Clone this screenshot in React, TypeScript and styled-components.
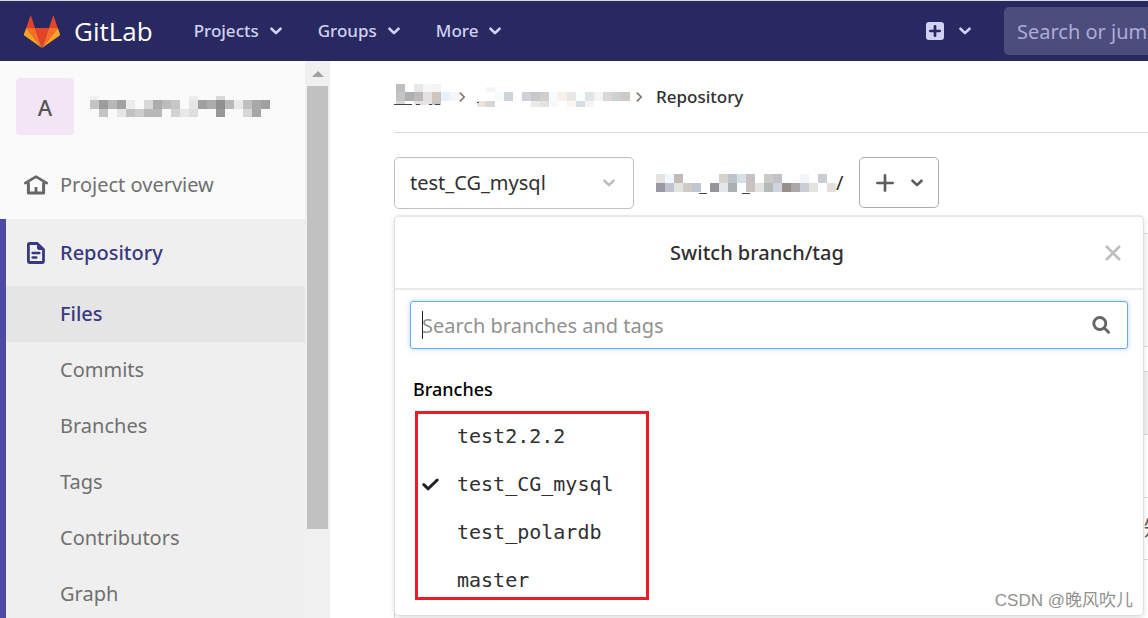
import React from "react";
import styled, { createGlobalStyle, css } from "styled-components";

const Global = createGlobalStyle`
  *, *::before, *::after { box-sizing: border-box; }
  html, body, #root { height: 100%; }
  body { margin: 0; overflow: hidden; background: #fff; color: #303030; font-family: "Noto Sans", "Noto Sans CJK SC", sans-serif; font-size: 20px; line-height: 28px; }
  button, input { font: inherit; color: inherit; }
  button { cursor: pointer; }
  a { color: inherit; text-decoration: none; }
  ul { list-style: none; margin: 0; padding: 0; }
  svg { display: block; flex: none; }
`;

const Page = styled.div`
  height: 100vh;
  display: flex;
  flex-direction: column;
  overflow: hidden;
`;

const Navbar = styled.header`
  flex: none;
  height: 61px;
  border-top: 1px solid #d9dbde;
  background: #292961;
  color: #d1d1f0;
  display: flex;
  align-items: center;
  overflow: hidden;
`;

const Brand = styled.a`
  display: flex;
  align-items: center;
  gap: 14px;
  margin-left: 24px;
  margin-right: 41px;
  color: #fff;
  font-family: "Open Sans", sans-serif;
  font-size: 26px;
  line-height: 32px;
`;

const NavMenu = styled.nav`
  display: flex;
  gap: 36px;
  flex: 1;
`;

const NavButton = styled.button`
  border: 0;
  padding: 0;
  background: none;
  display: flex;
  align-items: center;
  gap: 11px;
  font-size: 17px;
  font-weight: 500;
  line-height: 24px;
`;

const NewButton = styled(NavButton)`
  gap: 15px;
  margin-right: 33px;
`;

const NavSearch = styled.input`
  flex: none;
  width: 360px;
  margin-right: -216px;
  height: 48px;
  border: 0;
  border-radius: 5px;
  padding: 0 13px;
  background: #4c4c7d;
  &::placeholder { color: #adadd6; opacity: 1; }
`;

const Body = styled.div`
  flex: 1;
  min-height: 0;
  display: flex;
`;

const Sidebar = styled.aside`
  flex: none;
  width: 330px;
  display: flex;
  background: #fafafa;
  overflow: hidden;
`;

const SidebarContent = styled.div`
  flex: 1;
  display: flex;
  flex-direction: column;
`;

const Project = styled.a`
  flex: none;
  display: flex;
  align-items: center;
  gap: 16px;
  padding: 17px 16px 16px;
`;

const Avatar = styled.span`
  width: 58px;
  height: 57px;
  border-radius: 4px;
  background: #f3e5f5;
  color: #555;
  font-size: 22px;
  font-weight: 500;
  display: grid;
  place-items: center;
`;

const SideLink = styled.a<{ $active?: boolean }>`
  flex: none;
  display: flex;
  align-items: center;
  gap: 12px;
  height: 68px;
  padding-left: 24px;
  color: #707070;
  ${(p) => p.$active && css`
    padding-left: 18px;
    color: #393982;
    font-weight: 500;
    height: 67px;
  `}
`;

const Section = styled.div`
  flex: 1;
  border-left: 6px solid #4b4ba3;
  background: #efefef;
`;

const SubLink = styled.a<{ $active?: boolean }>`
  display: flex;
  align-items: center;
  height: 56px;
  padding-left: 54px;
  color: ${(p) => (p.$active ? "#393982" : "#707070")};
  background: ${(p) => (p.$active ? "#e5e5e5" : "none")};
  font-weight: ${(p) => (p.$active ? 500 : 400)};
`;

const Scrollbar = styled.div`
  width: 25px;
  background: #f0f0f0;
  padding-top: 10px;
  display: flex;
  flex-direction: column;
  align-items: center;
  gap: 9px;
`;

const ScrollThumb = styled.div`
  width: 21px;
  height: 443px;
  background: #c1c1c1;
`;

const Content = styled.main`
  position: relative;
  flex: 1;
  min-width: 0;
  padding-left: 64px;
`;

const Breadcrumbs = styled.nav`
  display: flex;
  align-items: center;
  height: 72px;
  border-bottom: 1px solid #dbdbdb;
  font-size: 17px;
  font-weight: 500;
`;

const Crumb = styled.a`
  min-width: 59px;
  padding-left: 2px;
  & + svg { margin-left: 6px; margin-right: 9px; }
`;

const CurrentCrumb = styled.a`
  padding-left: 4px;
`;

const TreeControls = styled.div`
  display: flex;
  align-items: flex-start;
  margin-top: 24px;
  height: 52px;
`;

const RefButton = styled.button`
  width: 240px;
  height: 52px;
  border: 1px solid #bfbfbf;
  border-radius: 5px;
  background: #fff;
  display: flex;
  align-items: center;
  justify-content: space-between;
  padding: 0 18px 0 15px;
`;

const PathRoot = styled.a`
  display: flex;
  align-items: center;
  height: 52px;
  margin-left: 22px;
  margin-right: 16px;
`;

const AddButton = styled.button`
  width: 80px;
  height: 51px;
  border: 1px solid #aaa;
  border-radius: 5px;
  background: #fff;
  display: flex;
  align-items: center;
  justify-content: center;
  gap: 17px;
  padding: 0;
`;

const Files = styled.div`
  margin-top: 24px;
  border: 1px solid #dbdbdb;
  border-right: 0;
`;

const FileBand = styled.div<{ $height: number; $tone: string }>`
  height: ${(p) => p.$height}px;
  background: ${(p) => p.$tone};
  border-bottom: 1px solid #dbdbdb;
  display: flex;
  align-items: center;
  justify-content: flex-end;
  overflow: hidden;
`;

const Updated = styled.span`
  flex: none;
  margin-right: -16px;
  color: #555;
`;

const Dropdown = styled.section`
  position: absolute;
  z-index: 2;
  top: 154px;
  left: 64px;
  right: 4px;
  height: 401px;
  border: 1px solid #dedede;
  border-top: 2px solid #e8e8e8;
  border-radius: 5px;
  background: #fff;
  box-shadow: 0 2px 5px rgba(0, 0, 0, 0.12);
`;

const DropdownTitle = styled.header`
  display: flex;
  align-items: center;
  height: 73px;
  padding: 0 22px 0 14px;
  border-bottom: 2px solid #ebebeb;
  h2 { flex: 1; margin: 0; font-size: 20px; line-height: 28px; font-weight: 500; text-align: center; }
`;

const CloseButton = styled.button`
  border: 0;
  padding: 0;
  background: none;
`;

const SearchBox = styled.label`
  display: flex;
  align-items: center;
  height: 48px;
  margin: 11px 15px 0;
  padding: 0 17px 0 11px;
  border: 1px solid #6aa9ea;
  border-radius: 3px;
  box-shadow: 0 0 5px rgba(74, 144, 226, 0.4);
`;

const Caret = styled.span`
  width: 1px;
  height: 28px;
  margin-right: -1px;
  background: #222;
`;

const SearchInput = styled.input`
  flex: 1;
  min-width: 0;
  border: 0;
  outline: 0;
  padding: 2px 0 0;
  background: none;
  &::placeholder { color: #919191; opacity: 1; }
`;

const GroupTitle = styled.h3`
  margin: 27px 0 0 18px;
  font-size: 18px;
  line-height: 26px;
  font-weight: 500;
  color: #000;
`;

const BranchList = styled.ul`
  position: relative;
  width: 234px;
  margin: 10px 0 0 20px;
  &::after {
    content: "";
    position: absolute;
    inset: -1px 0 4px;
    border: 3px solid #ed1c24;
    pointer-events: none;
  }
`;

const BranchButton = styled.button`
  display: grid;
  grid-template-columns: 35px 1fr;
  align-items: center;
  width: 100%;
  height: 48px;
  border: 0;
  padding: 0 0 0 7px;
  background: none;
  text-align: left;
  font-family: "DejaVu Sans Mono", monospace;
  span { grid-column: 2; }
  svg { grid-column: 1; grid-row: 1; }
`;

const Watermark = styled.div`
  position: absolute;
  z-index: 3;
  right: 15px;
  bottom: 3px;
  color: #909090;
  font-family: "Liberation Sans", "Noto Sans CJK SC", sans-serif;
  font-size: 17px;
  line-height: 28px;
`;

const Tanuki = () => (
  <svg width="36" height="33" viewBox="0 0 36 33" aria-hidden="true">
    <path d="M6.7 0 11 13H2.2zM29.3 0 25 13h8.8z" fill="#e24329" />
    <path d="M11 13h14l-7 20z" fill="#e24329" />
    <path d="M2.2 13H11l7 20zM33.8 13H25l-7 20z" fill="#fc6d26" />
    <path d="M2.2 13 0 19q-.3 1 .6 1.8L18 33zM33.8 13 36 19q.3 1-.6 1.8L18 33z" fill="#fca326" />
  </svg>
);

const ChevronDown = ({ color = "currentColor" }: { color?: string }) => (
  <svg width="12" height="8" viewBox="0 0 12 8" fill="none" stroke={color} strokeWidth="2.6" strokeLinecap="round" strokeLinejoin="round" aria-hidden="true">
    <path d="M1.5 1.7 6 6.1l4.5-4.4" />
  </svg>
);

const CrumbArrow = () => (
  <svg width="7" height="10" viewBox="0 0 7 10" fill="none" stroke="#777" strokeWidth="1.7" strokeLinecap="round" strokeLinejoin="round" aria-hidden="true">
    <path d="M1.3 1.2 5.2 5 1.3 8.8" />
  </svg>
);

const PlusSquare = () => (
  <svg width="18" height="18" viewBox="0 0 18 18" aria-hidden="true">
    <rect width="18" height="18" rx="3" fill="#d1d1f0" />
    <path d="M9 4.3v9.4M4.3 9h9.4" stroke="#292961" strokeWidth="2.7" strokeLinecap="round" />
  </svg>
);

const Plus = () => (
  <svg width="18" height="18" viewBox="0 0 18 18" fill="none" stroke="#5c5c5c" strokeWidth="2.7" strokeLinecap="round" aria-hidden="true">
    <path d="M9 1.4v15.2M1.4 9h15.2" />
  </svg>
);

const Home = () => (
  <svg width="24" height="20" viewBox="0 0 24 20" fill="none" stroke="#666" aria-hidden="true">
    <path d="M1.3 8.1 12 1.7l10.7 6.4" strokeWidth="2.6" strokeLinecap="round" strokeLinejoin="round" />
    <path d="M4.4 7.5v10.6h15.2V7.5" strokeWidth="3" strokeLinejoin="round" />
    <path d="M12 12v5" strokeWidth="2.8" />
  </svg>
);

const DocIcon = () => (
  <svg width="24" height="22" viewBox="0 0 24 22" fill="none" stroke="#393982" aria-hidden="true">
    <path d="M5.400 1.500h7.900l6.200 6v12q0 1-1 1H5.400q-1 0-1-1v-17q0-1 1-1z" strokeWidth="2.8" strokeLinejoin="round" />
    <path d="M13.500 1.500v4.500q0 1.500 1.500 1.500h4.500z" fill="#393982" strokeWidth="1" />
    <path d="M8.700 11h6.600M8.700 15.500h3.600" strokeWidth="2.5" strokeLinecap="round" />
  </svg>
);

const Close = () => (
  <svg width="16" height="16" viewBox="0 0 16 16" fill="none" stroke="#bfbfbf" strokeWidth="2.7" strokeLinecap="round" aria-hidden="true">
    <path d="m1.8 1.8 12.4 12.4M14.2 1.8 1.8 14.2" />
  </svg>
);

const Magnifier = () => (
  <svg width="18" height="18" viewBox="0 0 18 18" fill="none" stroke="#666" strokeLinecap="round" aria-hidden="true">
    <circle cx="7.8" cy="7.5" r="6" strokeWidth="2.9" />
    <path d="m12.3 12 4.2 4.2" strokeWidth="3" />
  </svg>
);

const Check = () => (
  <svg width="17" height="13" viewBox="0 0 17 13" fill="none" stroke="#222" strokeWidth="3" strokeLinecap="round" strokeLinejoin="round" aria-hidden="true">
    <path d="m1.8 6.600 4.400 4.200 9-8.800" />
  </svg>
);

const ScrollUp = () => (
  <svg width="12" height="6" viewBox="0 0 12 6" aria-hidden="true">
    <path d="M6 0l6 6H0z" fill="#a0a0a0" />
  </svg>
);

type MosaicProps = {
  rows: { height: number; cells: string }[];
  columns: number;
  marks?: { x: number; y: number; w: number }[];
};

// Pixelated name: each row lists one colour per 9px cell, "-" leaves a cell empty.
const Mosaic = ({ rows, columns, marks = [] }: MosaicProps) => {
  const total = rows.reduce((sum, row) => sum + row.height, 0);
  let top = 0;
  return (
    <svg width={columns * 9} height={total} shapeRendering="crispEdges" overflow="visible" role="img" aria-label="Hidden name">
      {rows.map((row, r) => {
        const y = top;
        top += row.height;
        return row.cells.split(" ").map((cell, c) =>
          cell === "-" ? null : <rect key={`${r}-${c}`} x={c * 9} y={y} width="9" height={row.height} fill={`#${cell}`} />
        );
      })}
      {marks.map((m) => <rect key={m.x} x={m.x} y={m.y} width={m.w} height="1" fill="#444" />)}
    </svg>
  );
};

const projectName = [
  { height: 4, cells: "f0f0f0 - - - - - - - - - - ececec - - d8d8d8" },
  { height: 9, cells: "c4c4c4 9c9c9c b8b8b8 a2a2a2 ececec - d8d8d8 acacac bcbcbc c6c6c6 - e6e6e6 a0a0a0 acacac 909090 b8b8b8 eaeaea c0c0c0 a8a8a8 a0a0a0" },
  { height: 8, cells: "- c4c4c4 - e6e6e6 c2c2c2 cccccc b8b8b8 b8b8b8 - d2d2d2 e8e8e8 dedede - - 989898 - - d8d8d8 a6a6a6 -" },
];

const groupName = [
  { height: 8, cells: "bebebe - e8e8e8 f6f6f6 f4f4f4 -" },
  { height: 9, cells: "c0c5c9 b0b0b0 bcbab8 e4e0df d1c5bc e6f2ff f6f6f6" },
  { height: 4, cells: "dcd6d4 - e2e2e2 e8e4e2 c4c4c4 - -" },
  { height: 5, cells: "-" },
];

const repoName = [
  { height: 5, cells: "- f4f4f4" },
  { height: 9, cells: "- - f6faf8 d0d2da - d0cfda c6c8cc d0cecc f6fcff f8f0e8 e8e8e6 f8fefc dfe5e6 f4f4f4 d8d8d8 ccd2d2 d0cac6" },
  { height: 6, cells: "ece2de d8d6d4 - - - - e6eaea e4e2e0 f6fafc - fcf6ee d8dce4 f4f4f4" },
];

const pathName = [
  { height: 9, cells: "e6e2df f0f8ff c4bab9 - - - - d6d2cc bcc4ca d6e0ea c8c0c2 - cbcac6 c2c2c4 - - f2f4f8 - c8ced4" },
  { height: 9, cells: "9a98a0 c0c2d0 e2e4e2 d0cac6 c0c6d4 - 969698 e4e6e8 a8b0b4 fafefe cac2be e2e4e2 b4bab8 d0d4de 989088 aca6a4 cacdd4 e4e2de - e4e0dd" },
];

const branches = ["test2.2.2", "test_CG_mysql", "test_polardb", "master"];
const current = "test_CG_mysql";

export default function App() {
  return (
    <Page>
      <Global />
      <Navbar>
        <Brand href="#"><Tanuki />GitLab</Brand>
        <NavMenu>
          {["Projects", "Groups", "More"].map((name) => (
            <NavButton key={name}>{name}<ChevronDown /></NavButton>
          ))}
        </NavMenu>
        <NewButton aria-label="New"><PlusSquare /><ChevronDown /></NewButton>
        <NavSearch aria-label="Search" placeholder="Search or jump to…" />
      </Navbar>
      <Body>
        <Sidebar>
          <SidebarContent>
            <Project href="#">
              <Avatar>A</Avatar>
              <Mosaic columns={20} rows={projectName} />
            </Project>
            <SideLink href="#"><Home />Project overview</SideLink>
            <Section>
              <SideLink href="#" $active><DocIcon />Repository</SideLink>
              {["Files", "Commits", "Branches", "Tags", "Contributors", "Graph"].map((name) => (
                <SubLink key={name} href="#" $active={name === "Files"}>{name}</SubLink>
              ))}
            </Section>
          </SidebarContent>
          <Scrollbar><ScrollUp /><ScrollThumb /></Scrollbar>
        </Sidebar>
        <Content>
          <Breadcrumbs aria-label="Breadcrumb">
            <Crumb href="#"><Mosaic columns={6} rows={groupName} marks={[{ x: -2, y: 20, w: 18 }, { x: 20, y: 20, w: 4 }, { x: 33, y: 20, w: 3 }, { x: 39, y: 20, w: 5 }]} /></Crumb>
            <CrumbArrow />
            <Crumb href="#"><Mosaic columns={17} rows={repoName} marks={[{ x: 0, y: 15, w: 2 }]} /></Crumb>
            <CrumbArrow />
            <CurrentCrumb href="#">Repository</CurrentCrumb>
          </Breadcrumbs>
          <TreeControls>
            <RefButton aria-haspopup="listbox" aria-expanded="true">{current}<ChevronDown color="#bfbfbf" /></RefButton>
            <PathRoot href="#">
              <Mosaic columns={20} rows={pathName} marks={[{ x: 43, y: 19, w: 8 }, { x: 86, y: 19, w: 8 }]} />/
            </PathRoot>
            <AddButton aria-label="Add to tree"><Plus /><ChevronDown color="#5c5c5c" /></AddButton>
          </TreeControls>
          <Files>
            <FileBand $height={113} $tone="#fafafa" />
            <FileBand $height={25} $tone="#fff" />
            <FileBand $height={63} $tone="#f0f0f0" />
            <FileBand $height={63} $tone="#fff" />
            <FileBand $height={62} $tone="#fff"><Updated>知</Updated></FileBand>
            <FileBand $height={63} $tone="#fff" />
          </Files>
          <Dropdown>
            <DropdownTitle>
              <h2>Switch branch/tag</h2>
              <CloseButton aria-label="Close"><Close /></CloseButton>
            </DropdownTitle>
            <SearchBox>
              <Caret />
              <SearchInput aria-label="Search branches and tags" placeholder="Search branches and tags" />
              <Magnifier />
            </SearchBox>
            <GroupTitle>Branches</GroupTitle>
            <BranchList>
              {branches.map((branch) => (
                <li key={branch}>
                  <BranchButton>
                    {branch === current && <Check />}
                    <span>{branch}</span>
                  </BranchButton>
                </li>
              ))}
            </BranchList>
          </Dropdown>
          <Watermark>CSDN @晚风吹儿</Watermark>
        </Content>
      </Body>
    </Page>
  );
}
